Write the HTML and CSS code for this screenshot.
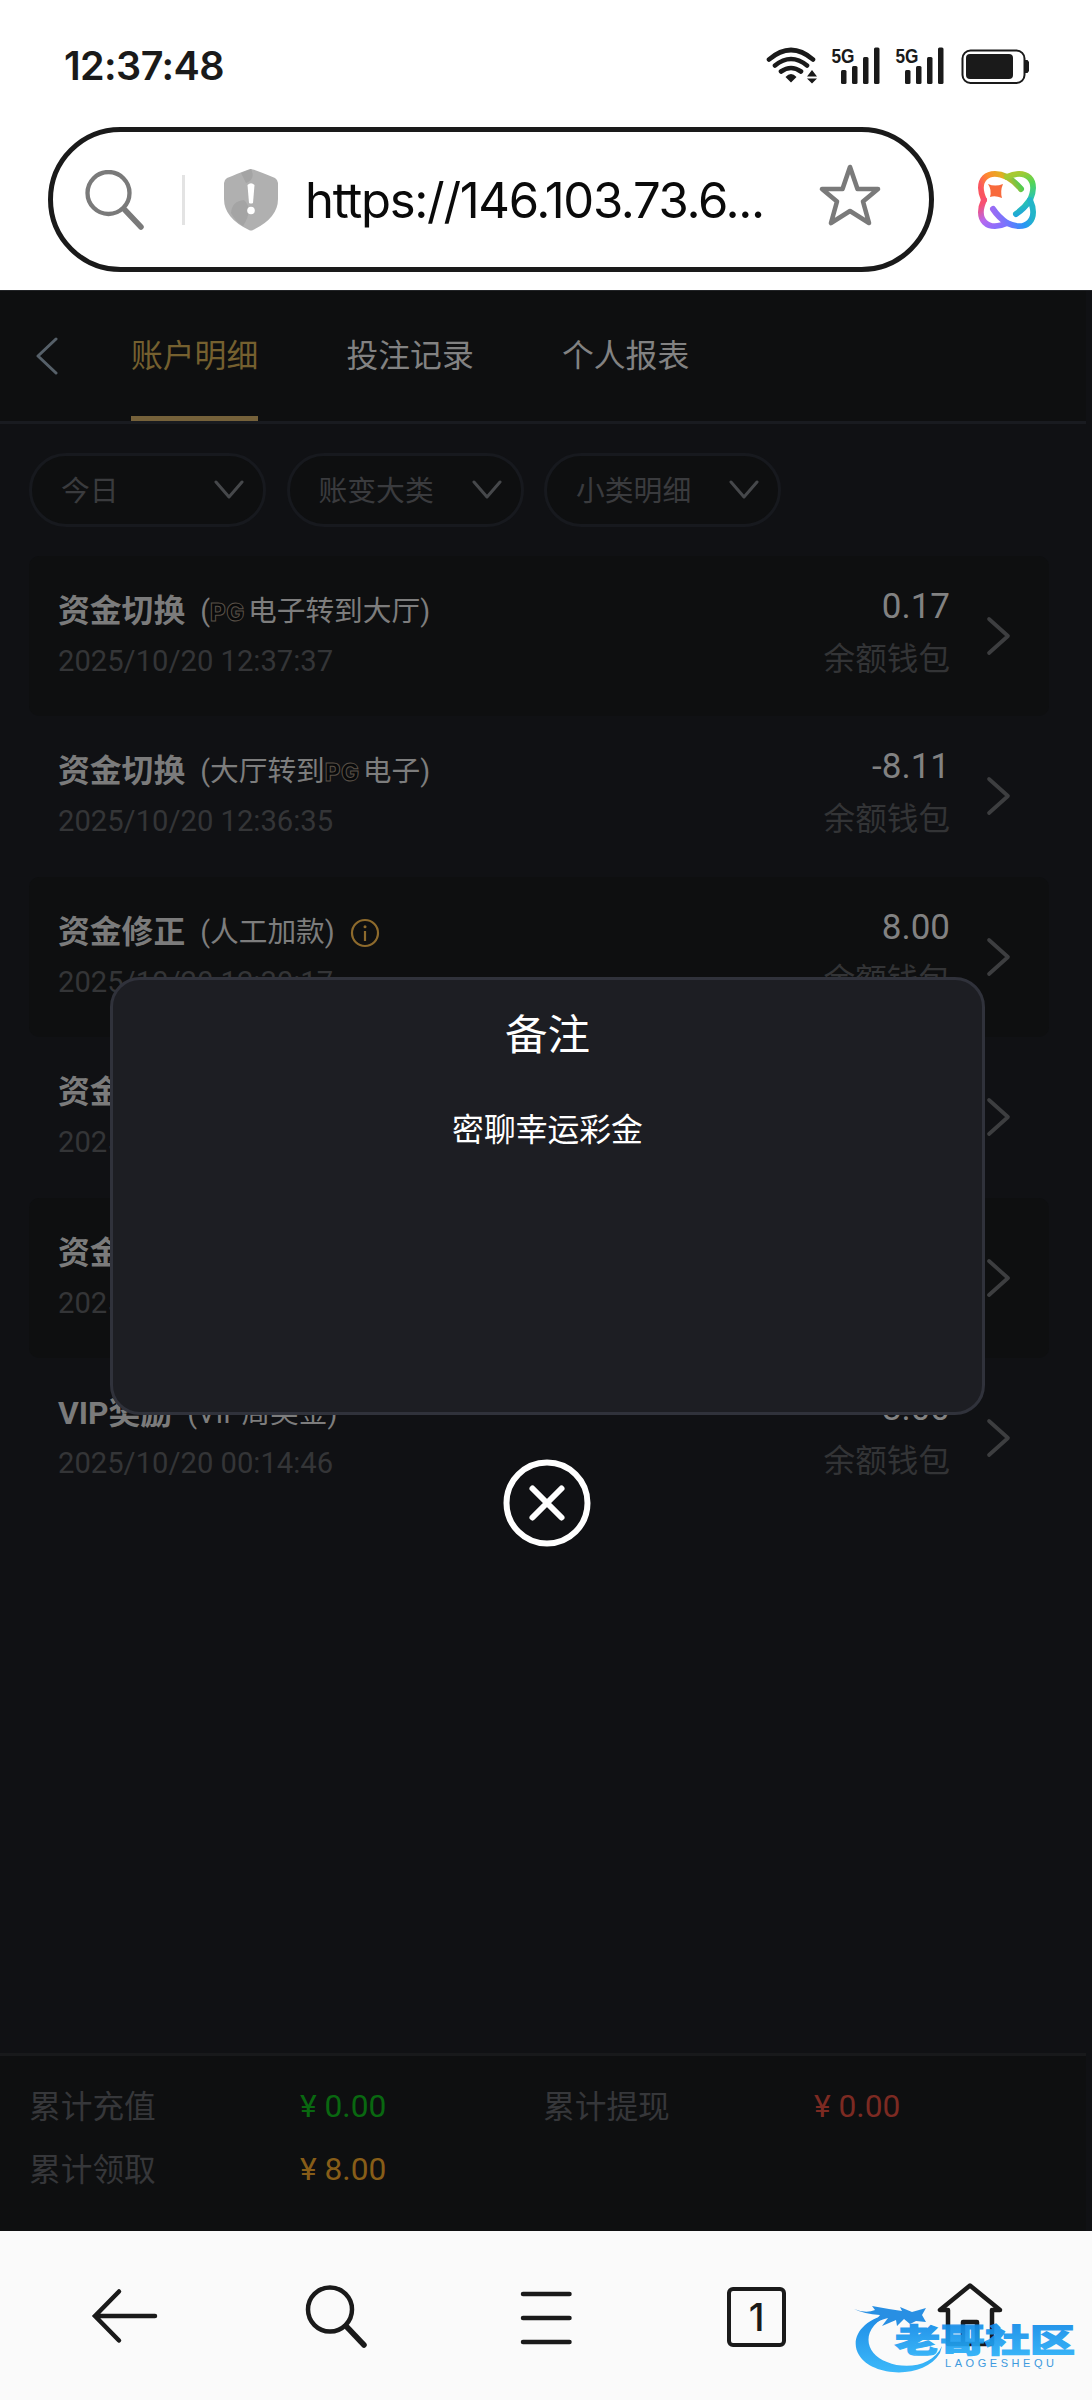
FILE: index.html
```html
<!DOCTYPE html>
<html lang="zh-CN">
<head>
<meta charset="utf-8">
<title>账户明细</title>
<link rel="stylesheet" href="styles.css">
</head>
<body>
<header class="browser">
  <div class="status">
    <span class="clock">12:37:48</span>
    <svg class="status-icons" width="270" height="50" viewBox="760 40 270 50">
      <g fill="none" stroke="#1a1a1a" stroke-width="4.600" stroke-linecap="round">
        <path d="M769 59.500Q791 40.500 813 59.500M775 65.500Q791 52.500 807 65.500M781 71.500Q791 64.500 801 71.500"/>
      </g>
      <path d="M785.500 77Q791 71 796.500 77L791 82.500ZM807 76.500l5-6.500 5 6.500ZM807 78.500h10l-5 5Z" fill="#1a1a1a"/>
      <g id="signal" fill="#1a1a1a">
        <text class="net" x="831.500" y="62.500" textLength="23" lengthAdjust="spacingAndGlyphs">5G</text>
        <rect x="841" y="70" width="5.500" height="14" rx="1.500"/>
        <rect x="852" y="66" width="5.500" height="18" rx="1.500"/>
        <rect x="863" y="57" width="5.500" height="27" rx="1.500"/>
        <rect x="874" y="47.500" width="5.500" height="36.500" rx="1.500"/>
      </g>
      <use href="#signal" x="64"/>
      <rect x="962.500" y="50.500" width="62" height="32.500" rx="8" fill="none" stroke="#1a1a1a" stroke-width="2"/>
      <rect x="966" y="54" width="47" height="25" rx="4" fill="#1a1a1a"/>
      <path d="M1025 60h2.500l1.500 2v9l-1.500 2H1025Z" fill="#1a1a1a"/>
    </svg>
  </div>
  <div class="address">
    <div class="urlbar">
      <svg class="i-search" width="60" height="60" viewBox="0 0 60 60" fill="none" stroke="#7a7a7a"><circle cx="24.500" cy="23" r="21" stroke-width="4.300"/><path d="M40.500 39.500L57 57" stroke-width="5.500" stroke-linecap="round"/></svg>
      <span class="sep"></span>
      <svg class="i-shield" width="54" height="62" viewBox="0 0 54 62"><path d="M27 0Q29 0 51 9Q54 11 54 14V30Q54 49 29 61Q27 62 25 61Q0 49 0 30V14Q0 11 3 9Q25 0 27 0Z" fill="#b0b0b0"/><path d="M17 4L27 0Q32 10 22 14ZM7 44Q8 32 20 31Q30 40 19 57Q11 52 7 44Z" fill="#a4a4a4"/><path d="M23.500 16Q27 12.500 30.500 16L29 34Q27 35 25 34Z" fill="#fff"/><circle cx="27" cy="41.500" r="3.800" fill="#fff"/></svg>
      <span class="url">https://146.103.73.6...</span>
      <svg class="i-star" width="66" height="64" viewBox="0 0 66 64" fill="none" stroke="#7a7a7a" stroke-width="4.600" stroke-linejoin="round"><path d="M33 4L40.500 26H61L46 38.500L52 60L33 48L14 60L20 38.500L5 26H25.500Z"/></svg>
    </div>
    <svg class="i-ai" width="58" height="58" viewBox="0 0 58 58" fill="none" stroke-linecap="round">
      <defs>
        <linearGradient id="ga" gradientUnits="userSpaceOnUse" x1="8" y1="28" x2="42" y2="12"><stop offset="0" stop-color="#fa5560"/><stop offset=".3" stop-color="#ff8a30"/><stop offset=".65" stop-color="#e3b020"/><stop offset="1" stop-color="#50cc50"/></linearGradient>
        <linearGradient id="gb" gradientUnits="userSpaceOnUse" x1="34" y1="4" x2="48" y2="46"><stop offset="0" stop-color="#a8c930"/><stop offset=".3" stop-color="#55d555"/><stop offset=".65" stop-color="#2bc5b0"/><stop offset="1" stop-color="#1b9be8"/></linearGradient>
        <linearGradient id="gc" gradientUnits="userSpaceOnUse" x1="10" y1="29" x2="26" y2="54"><stop offset="0" stop-color="#f85070"/><stop offset=".5" stop-color="#b868ee"/><stop offset="1" stop-color="#8070ff"/></linearGradient>
        <linearGradient id="gd" gradientUnits="userSpaceOnUse" x1="12" y1="44" x2="52" y2="34"><stop offset="0" stop-color="#a868f0"/><stop offset=".4" stop-color="#6b78ff"/><stop offset=".75" stop-color="#2796f5"/><stop offset="1" stop-color="#22b5c8"/></linearGradient>
      </defs>
      <g stroke-width="6">
        <path d="M6 29A31.500 19 45 0 1 29 6A31.500 19 45 0 1 43 18" stroke="url(#ga)"/>
        <path d="M29 6A31.500 19 135 0 1 52 29A31.500 19 135 0 1 38 43" stroke="url(#gb)"/>
        <path d="M6 29A31.500 19 135 0 0 29 52" stroke="url(#gc)"/>
        <path d="M52 29A31.500 19 45 0 1 29 52A31.500 19 45 0 1 15 38" stroke="url(#gd)"/>
      </g>
      <path d="M10 13Q17 16 25 13Q22 20 24 27Q17 24 12 26Q14 19 10 13Z" fill="#f86a3c"/>
    </svg>
  </div>
</header>

<main class="page">
  <nav class="tabs">
    <svg class="back" width="24" height="38" viewBox="0 0 24 38"><path d="M21 2L3 19L21 36" fill="none" stroke="#566069" stroke-width="3" stroke-linecap="round" stroke-linejoin="round"/></svg>
    <span class="tab active">账户明细</span>
    <span class="tab">投注记录</span>
    <span class="tab">个人报表</span>
  </nav>

  <div class="filters">
    <div class="pill"><span>今日</span><svg width="30" height="20" viewBox="0 0 30 20"><path d="M2 2L15 17L28 2"/></svg></div>
    <div class="pill"><span>账变大类</span><svg width="30" height="20" viewBox="0 0 30 20"><path d="M2 2L15 17L28 2"/></svg></div>
    <div class="pill"><span>小类明细</span><svg width="30" height="20" viewBox="0 0 30 20"><path d="M2 2L15 17L28 2"/></svg></div>
  </div>

  <div class="list">
    <div class="row">
      <div class="info"><div class="title"><b>资金切换</b><span>(<i class="pg">PG</i>电子转到大厅)</span></div><div class="date">2025/10/20 12:37:37</div></div>
      <div class="money"><div class="amount">0.17</div><div class="wallet">余额钱包</div></div>
      <svg class="more" width="26" height="40" viewBox="0 0 26 40"><path d="M3 3L22 20L3 37"/></svg>
    </div>
    <div class="row">
      <div class="info"><div class="title"><b>资金切换</b><span>(大厅转到<i class="pg">PG</i>电子)</span></div><div class="date">2025/10/20 12:36:35</div></div>
      <div class="money"><div class="amount">-8.11</div><div class="wallet">余额钱包</div></div>
      <svg class="more" width="26" height="40" viewBox="0 0 26 40"><path d="M3 3L22 20L3 37"/></svg>
    </div>
    <div class="row">
      <div class="info"><div class="title"><b>资金修正</b><span>(人工加款)</span><svg class="hint" width="30" height="30" viewBox="0 0 30 30"><circle cx="15" cy="15" r="13" fill="none" stroke="#8d6a2c" stroke-width="2.200"/><circle cx="15" cy="8.800" r="1.500" fill="#8d6a2c"/><path d="M15 13V23" stroke="#8d6a2c" stroke-width="2.200"/></svg></div><div class="date">2025/10/20 12:30:17</div></div>
      <div class="money"><div class="amount">8.00</div><div class="wallet">余额钱包</div></div>
      <svg class="more" width="26" height="40" viewBox="0 0 26 40"><path d="M3 3L22 20L3 37"/></svg>
    </div>
    <div class="row">
      <div class="info"><div class="title"><b>资金</b></div><div class="date">2025</div></div>
      <svg class="more" width="26" height="40" viewBox="0 0 26 40"><path d="M3 3L22 20L3 37"/></svg>
    </div>
    <div class="row">
      <div class="info"><div class="title"><b>资金</b></div><div class="date">2025</div></div>
      <svg class="more" width="26" height="40" viewBox="0 0 26 40"><path d="M3 3L22 20L3 37"/></svg>
    </div>
    <div class="row">
      <div class="info"><div class="title"><b>VIP奖励</b><span>(VIP周奖金)</span></div><div class="date">2025/10/20 00:14:46</div></div>
      <div class="money"><div class="amount">8.00</div><div class="wallet">余额钱包</div></div>
      <svg class="more" width="26" height="40" viewBox="0 0 26 40"><path d="M3 3L22 20L3 37"/></svg>
    </div>
  </div>

  <footer class="totals">
    <span class="label">累计充值</span><span class="num green">¥ 0.00</span><span class="label">累计提现</span><span class="num red">¥ 0.00</span>
    <span class="label">累计领取</span><span class="num gold">¥ 8.00</span>
  </footer>
</main>

<section class="dialog">
  <h2>备注</h2>
  <p>密聊幸运彩金</p>
</section>
<svg class="close" width="88" height="88" viewBox="0 0 88 88" fill="none" stroke="#fff" stroke-linecap="round"><circle cx="44" cy="44" r="40.500" stroke-width="6"/><path d="M29.500 29.500L58.500 58.500M58.500 29.500L29.500 58.500" stroke-width="6"/></svg>

<nav class="toolbar">
  <svg width="72" height="72" viewBox="0 0 72 72"><path d="M67 36H7M31 11.500L7 36L31 60.500"/></svg>
  <svg width="72" height="72" viewBox="0 0 72 72"><circle cx="30" cy="29.500" r="22"/><path d="M46 46L64 65" stroke-width="5.500"/></svg>
  <svg width="72" height="72" viewBox="0 0 72 72"><path d="M11 14H57.500M11 38H57.500M11 62H57.500"/></svg>
  <span class="count">1</span>
  <svg width="72" height="72" viewBox="0 0 72 72"><path d="M36 5.500L6 30H14V64H58V30H66ZM29 64V42H43V64" stroke-linejoin="round"/></svg>
</nav>

<svg class="mark" width="230" height="90" viewBox="850 2295 230 90">
  <defs><linearGradient id="blue" x1="0" y1="0" x2="0" y2="1"><stop offset="0" stop-color="#0c82e4"/><stop offset="1" stop-color="#2cb4fa"/></linearGradient></defs>
  <path d="M892 2314C862 2318 849 2339 859 2355C872 2377 924 2380 940 2353L942 2346C933 2366 906 2370 887 2362C863 2353 860 2326 892 2314Z" fill="url(#blue)"/>
  <path d="M854 2309Q866 2314 875 2310L872 2306Q888 2309 902 2311L900 2307L912 2312L926 2308L922 2315L926 2322L916 2321L910 2324L904 2319L897 2326L896 2320L882 2326L888 2318Q879 2320 872 2325L880 2315Q864 2314 854 2309Z" fill="#1787e2"/>
  <text class="mark-name" x="895" y="2352" textLength="180" lengthAdjust="spacingAndGlyphs" fill="url(#blue)" stroke="url(#blue)">老哥社区</text>
  <text class="mark-sub" x="945" y="2367" textLength="109">LAOGESHEQU</text>
</svg>
</body>
</html>
```
FILE: styles.css
```css
* { box-sizing: border-box; }
body {
  margin: 0;
  position: relative;
  width: 1092px;
  height: 2400px;
  overflow: hidden;
  background: #101114;
  font-family: Roboto, "Noto Sans CJK SC", sans-serif;
}
svg { display: block; flex: none; }

.browser { height: 290px; background: #fff; }
.status {
  height: 127px;
  padding: 40px 62px 0 64px;
  display: flex;
  justify-content: space-between;
}
.clock {
  font: 600 39.500px/52px Inter, sans-serif;
  letter-spacing: -0.600px;
  color: #1a1a1a;
}
.net { font: 700 21px "Liberation Sans", sans-serif; }
.address { display: flex; align-items: center; padding: 0 56px 0 48px; justify-content: space-between; }
.urlbar {
  width: 886px;
  height: 145px;
  border: 5px solid #1a1a1a;
  border-radius: 73px;
  display: flex;
  align-items: center;
  padding-left: 31px;
}
.sep { width: 3px; height: 50px; margin-left: 38px; background: #e3e3e3; }
.i-shield { margin-left: 39px; }
.url {
  width: 488px;
  margin-left: 27px;
  padding-top: 3px;
  font: 400 49px/64px Inter, sans-serif;
  letter-spacing: -1.300px;
  color: #0a0a0a;
  white-space: nowrap;
}
.i-star { margin-left: 24px; margin-bottom: 9px; }

.page { height: 1941px; display: flex; flex-direction: column; border-top: 1px solid #222427; }
.tabs {
  width: 1086px;
  height: 133px;
  display: flex;
  align-items: stretch;
  background: #0e0f10;
  border-bottom: 3px solid #191b20;
  padding-left: 35px;
}
.back { margin: 46px 72px 0 0; }
.tab {
  width: 127px;
  margin-right: 88.500px;
  font-size: 31.800px;
  line-height: 130px;
  color: #828282;
  white-space: nowrap;
}
.tab.active { height: 130px; line-height: 130px; color: #75602f; border-bottom: 5px solid #75613a; }

.filters { display: flex; gap: 20.500px; padding: 29px 0 0 29px; height: 132px; }
.pill {
  width: 237px;
  height: 74px;
  display: flex;
  align-items: center;
  justify-content: space-between;
  padding: 0 19px 0 29px;
  background: #0e0f10;
  border: 3px solid #17191e;
  border-radius: 37px;
  font-size: 28.800px;
  color: #3a3b3e;
}
.pill span { padding-bottom: 4px; }
.pill path { fill: none; stroke: #46484b; stroke-width: 3; stroke-linecap: round; stroke-linejoin: round; }

.list { flex: 1; padding-left: 29px; }
.row { width: 1020px; height: 160.400px; display: flex; border-radius: 10px; padding: 0 37px 0 29px; }
.row:nth-child(odd) { background: #0e0f10; }
.info { flex: 1; padding-top: 30px; white-space: nowrap; }
.title { display: flex; align-items: center; height: 50px; font-size: 28.700px; line-height: 50px; color: #7d7d7d; }
.title b { font-size: 31.800px; margin-right: 15px; color: #7b7b7b; }
.hint { margin: 3px 0 0 15px; }
.pg {
  display: inline-block;
  width: 38px;
  font: 800 24px/30px Inter, sans-serif;
  letter-spacing: 0.500px;
  color: #08090a;
  -webkit-text-stroke: 1px #5a5148;
}
.date { font-size: 29.200px; line-height: 50px; color: #343537; }
.money { padding-top: 27px; text-align: right; }
.amount { font-size: 35px; line-height: 48px; color: #828282; }
.wallet { font-size: 31.600px; line-height: 57px; color: #333436; }
.more { margin: 60px 0 0 36px; }
.more path { fill: none; stroke: #3d3e40; stroke-width: 3.700; stroke-linecap: round; stroke-linejoin: round; }

.totals {
  width: 1086px;
  height: 178px;
  display: grid;
  grid-template-columns: 271px 243px 271px 243px;
  grid-template-rows: 63px 63px;
  align-content: start;
  align-items: center;
  padding: 19px 0 0 29px;
  background: #0e0f10;
  border-top: 3px solid #18191b;
  font-size: 31.700px;
  color: #36373a;
}
.label { padding-bottom: 5px; }
.num { font-size: 31.700px; }
.green { color: #096810; }
.red { color: #7c2a22; }
.gold { color: #875d18; }

.dialog {
  position: absolute;
  left: 110px;
  top: 977px;
  width: 875px;
  height: 438px;
  border: 3px solid #30323b;
  border-radius: 30px;
  background: #1d1e23;
  color: #fff;
  text-align: center;
}
.dialog h2 { margin: 24px 0 0; font-size: 42.500px; font-weight: 400; line-height: 64px; }
.dialog p { margin: 37px 0 0; font-size: 31.800px; line-height: 50px; }
.close { position: absolute; left: 503px; top: 1459px; }

.toolbar {
  height: 169px;
  display: flex;
  justify-content: space-between;
  padding: 49px 86px 0 88px;
  background: #fafafa;
}
.toolbar path, .toolbar circle { fill: none; stroke: #1a1a1a; stroke-width: 4.500; stroke-linecap: round; }
.toolbar svg:nth-child(2) path { stroke-width: 5.500; }
.count {
  width: 59px;
  height: 60px;
  margin: 6.500px 8px 0 4px;
  border: 4.500px solid #1a1a1a;
  border-radius: 6px;
  font: 500 38px/52px Inter, sans-serif;
  text-align: center;
  color: #1a1a1a;
}
.mark { position: absolute; left: 850px; top: 2295px; opacity: 0.92; }
.mark-name { font: 900 32px "Noto Sans CJK SC", sans-serif; stroke-width: 1.200px; }
.mark-sub { font: 400 11px "Liberation Sans", sans-serif; fill: #2d92dc; }
```
